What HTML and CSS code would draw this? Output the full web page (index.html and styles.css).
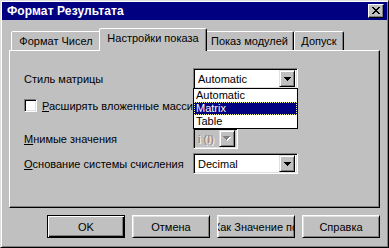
FILE: index.html
```
<!DOCTYPE html>
<html>
<head>
<meta charset="utf-8">
<link rel="stylesheet" href="styles.css">
</head>
<body>
<div class="window">
  <div class="titlebar">
    <span class="title">Формат Результата</span>
    <div class="close">
      <svg width="8" height="7" viewBox="0 0 8 7" shape-rendering="crispEdges"><path d="M0 0h2v1h-2zM6 0h2v1h-2zM1 1h2v1h-2zM5 1h2v1h-2zM2 2h4v1h-4zM3 3h2v1h-2zM2 4h4v1h-4zM1 5h2v1h-2zM5 5h2v1h-2zM0 6h2v1h-2zM6 6h2v1h-2z" fill="#000"/></svg>
    </div>
  </div>
  <div class="tabs">
    <div class="tab t1">Формат Чисел</div>
    <div class="tab active t2">Настройки показа</div>
    <div class="tab t3">Показ модулей</div>
    <div class="tab t4">Допуск</div>
  </div>
  <div class="panel">
    <div class="row r1">
      <span class="label">Стиль матрицы</span>
      <div class="combo-wrap">
        <div class="combo"><span class="value">Automatic</span><span class="dd"><svg width="7" height="4" viewBox="0 0 7 4" shape-rendering="crispEdges"><path d="M0 0h7v1h-1v1h-1v1h-1v1h-1v-1h-1v-1h-1v-1h-1z" fill="#000"/></svg></span></div>
        <div class="list">
          <div class="item">Automatic</div>
          <div class="item sel">Matrix</div>
          <div class="item">Table</div>
        </div>
      </div>
    </div>
    <div class="row r2">
      <span class="check"></span>
      <span class="label2"><u>Р</u>асширять вложенные массивы</span>
    </div>
    <div class="row r3">
      <span class="label"><u>М</u>нимые значения</span>
      <div class="combo small disabled"><span class="value">i (I)</span><span class="dd"><svg width="8" height="5" viewBox="0 0 8 5" shape-rendering="crispEdges"><path d="M1 1h7v1h-1v1h-1v1h-1v1h-1v-1h-1v-1h-1v-1h-1z" fill="#fff"/><path d="M0 0h7v1h-1v1h-1v1h-1v1h-1v-1h-1v-1h-1v-1h-1z" fill="#808080"/></svg></span></div>
    </div>
    <div class="row r4">
      <span class="label"><u>О</u>снование системы счисления</span>
      <div class="combo"><span class="value">Decimal</span><span class="dd"><svg width="7" height="4" viewBox="0 0 7 4" shape-rendering="crispEdges"><path d="M0 0h7v1h-1v1h-1v1h-1v1h-1v-1h-1v-1h-1v-1h-1z" fill="#000"/></svg></span></div>
    </div>
  </div>
  <div class="buttons">
    <div class="btn default">OK</div>
    <div class="btn">Отмена</div>
    <div class="btn clip"><span>Как Значение по</span></div>
    <div class="btn">Справка</div>
  </div>
</div>
</body>
</html>
```

FILE: styles.css
```
html, body {
  margin: 0;
  padding: 0;
  background: #c0c0c0;
}
body {
  font-family: "Liberation Sans", Arial, sans-serif;
  font-size: 11px;
  color: #000;
}
.window {
  width: 389px;
  height: 248px;
  box-sizing: border-box;
  background: #c0c0c0;
  border: 1px solid;
  border-color: #dfdfdf #000 #000 #dfdfdf;
  box-shadow: inset 1px 1px #fff, inset -1px -1px #808080;
  padding: 1px;
  display: flex;
  flex-direction: column;
}
.titlebar {
  height: 18px;
  background: #000080;
  display: flex;
  align-items: center;
  justify-content: space-between;
  padding: 0 3px 0 5px;
}
.title {
  color: #fff;
  font-weight: bold;
  font-size: 12px;
  letter-spacing: 0.1px;
}
.close {
  width: 16px;
  height: 14px;
  box-sizing: border-box;
  background: #c0c0c0;
  border: 1px solid;
  border-color: #fff #000 #000 #fff;
  box-shadow: inset -1px -1px #808080;
  display: flex;
  align-items: center;
  justify-content: center;
  padding: 0 1px 1px 0;
}
.close svg { display: block; }
.tabs {
  height: 30px;
  display: flex;
  align-items: flex-end;
  padding-left: 9px;
  box-sizing: border-box;
}
.tab {
  height: 19px;
  box-sizing: border-box;
  border: 1px solid;
  border-bottom: none;
  border-color: #fff #000 transparent #fff;
  border-radius: 2px 2px 0 0;
  box-shadow: inset -1px 0 #808080;
  display: flex;
  align-items: center;
  justify-content: center;
  white-space: nowrap;
  padding-bottom: 1px;
  background: #c0c0c0;
}
.t1 { width: 90px; }
.t2 { width: 108px; }
.t3 { width: 89px; }
.t4 { width: 50px; }
.tab.active {
  height: 23px;
  margin: 0 -2px -1px -2px;
  position: relative;
  z-index: 1;
  padding-bottom: 4px;
}
.panel {
  margin: 0 7px;
  height: 158px;
  box-sizing: border-box;
  border: 1px solid;
  border-color: #fff #000 #000 #fff;
  box-shadow: inset -1px -1px #808080;
  padding: 17px 0 0 14px;
  display: flex;
  flex-direction: column;
}
.row {
  display: flex;
  align-items: center;
  height: 21px;
}
.r2 { margin-top: 6px; }
.r3 { margin-top: 12px; }
.r4 { margin-top: 4px; }
.label {
  width: 169px;
  white-space: nowrap;
}
.label2 {
  margin-left: 5px;
  width: 151px;
  overflow: hidden;
  white-space: nowrap;
}
.check {
  width: 13px;
  height: 13px;
  box-sizing: border-box;
  background: #fff;
  border: 1px solid;
  border-color: #808080 #fff #fff #808080;
  box-shadow: inset 1px 1px #000, inset -1px -1px #dfdfdf;
}
.combo-wrap {
  position: relative;
}
.combo {
  width: 105px;
  height: 21px;
  box-sizing: border-box;
  background: #fff;
  border: 1px solid;
  border-color: #808080 #fff #fff #808080;
  box-shadow: inset 1px 1px #000, inset -1px -1px #dfdfdf;
  padding: 2px;
  display: flex;
  align-items: center;
}
.combo .value {
  flex: 1;
  padding-left: 2px;
  white-space: nowrap;
}
.combo.small { width: 45px; }
.combo.disabled { background: #c0c0c0; }
.combo.disabled .value {
  color: #808080;
  text-shadow: 1px 1px #fff;
}
.dd {
  width: 16px;
  height: 17px;
  box-sizing: border-box;
  background: #c0c0c0;
  border: 1px solid;
  border-color: #dfdfdf #000 #000 #dfdfdf;
  box-shadow: inset 1px 1px #fff, inset -1px -1px #808080;
  display: flex;
  align-items: center;
  justify-content: center;
}
.dd svg { display: block; }
.list {
  position: absolute;
  top: 20px;
  left: 0;
  width: 105px;
  box-sizing: border-box;
  background: #fff;
  border: 1px solid #000;
  z-index: 2;
}
.item {
  height: 13px;
  line-height: 13px;
  padding-left: 2px;
  box-sizing: border-box;
}
.item.sel {
  background: #000080;
  color: #fff;
  outline: 1px dotted #ffff80;
  outline-offset: -1px;
}
.buttons {
  display: flex;
  justify-content: flex-end;
  gap: 7px;
  margin: 7px 7px 0 0;
}
.btn {
  width: 78px;
  height: 23px;
  box-sizing: border-box;
  border: 1px solid;
  border-color: #fff #000 #000 #fff;
  box-shadow: inset 1px 1px #dfdfdf, inset -1px -1px #808080;
  display: flex;
  align-items: center;
  justify-content: center;
  overflow: hidden;
  white-space: nowrap;
}
.btn.default {
  border-color: #000;
  box-shadow: inset 1px 1px #fff, inset -1px -1px #000, inset -2px -2px #808080;
}
.btn.clip span {
  flex: none;
}
```
